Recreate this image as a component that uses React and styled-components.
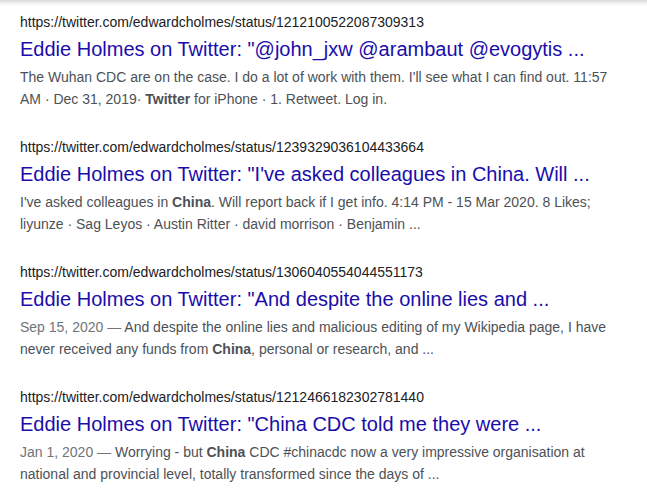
import React from 'react';
import styled, { createGlobalStyle } from 'styled-components';

const GlobalStyle = createGlobalStyle`
  body {
    margin: 0;
    background: #fff;
    font-family: Arial, "Liberation Sans", sans-serif;
  }
`;

const Page = styled.div`
  position: relative;
  width: 647px;
  height: 497px;
  overflow: hidden;
  background: #fff;
`;

const TopShadow = styled.div`
  height: 6px;
  background: linear-gradient(to bottom, #d8d8d8, #f4f4f4 60%, #fff);
`;

const List = styled.div`
  display: flex;
  flex-direction: column;
  gap: 27px;
  padding: 6px 0 0 20px;
  width: 600px;
`;

const Result = styled.div`
  display: flex;
  flex-direction: column;
`;

const Url = styled.div`
  font-size: 14px;
  line-height: 20px;
  color: #202124;
`;

const Title = styled.a`
  font-size: 20px;
  line-height: 26px;
  margin: 4px 0;
  color: #1a0dab;
  text-decoration: none;
`;

const Snippet = styled.div`
  font-size: 14px;
  line-height: 22px;
  color: #4d5156;

  b {
    font-weight: bold;
  }
`;

const Date = styled.span`
  color: #70757a;
`;

const results = [
  {
    url: 'https://twitter.com/edwardcholmes/status/1212100522087309313',
    title: 'Eddie Holmes on Twitter: "@john_jxw @arambaut @evogytis ...',
    snippet: (
      <>
        The Wuhan CDC are on the case. I do a lot of work with them. I'll see what I can find out. 11:57
        AM · Dec 31, 2019· <b>Twitter</b> for iPhone · 1. Retweet. Log in.
      </>
    ),
  },
  {
    url: 'https://twitter.com/edwardcholmes/status/1239329036104433664',
    title: 'Eddie Holmes on Twitter: "I\'ve asked colleagues in China. Will ...',
    snippet: (
      <>
        I've asked colleagues in <b>China</b>. Will report back if I get info. 4:14 PM - 15 Mar 2020. 8 Likes;
        liyunze · Sag Leyos · Austin Ritter · david morrison · Benjamin ...
      </>
    ),
  },
  {
    url: 'https://twitter.com/edwardcholmes/status/1306040554044551173',
    title: 'Eddie Holmes on Twitter: "And despite the online lies and ...',
    snippet: (
      <>
        <Date>Sep 15, 2020 — </Date>And despite the online lies and malicious editing of my Wikipedia page, I have
        never received any funds from <b>China</b>, personal or research, and ...
      </>
    ),
  },
  {
    url: 'https://twitter.com/edwardcholmes/status/1212466182302781440',
    title: 'Eddie Holmes on Twitter: "China CDC told me they were ...',
    snippet: (
      <>
        <Date>Jan 1, 2020 — </Date>Worrying - but <b>China</b> CDC #chinacdc now a very impressive organisation at
        national and provincial level, totally transformed since the days of ...
      </>
    ),
  },
];

export default function App() {
  return (
    <Page>
      <GlobalStyle />
      <TopShadow />
      <List>
        {results.map((r, key) => (
          <Result key={key}>
            <Url>{r.url}</Url>
            <Title href="#">{r.title}</Title>
            <Snippet>{r.snippet}</Snippet>
          </Result>
        ))}
      </List>
    </Page>
  );
}
